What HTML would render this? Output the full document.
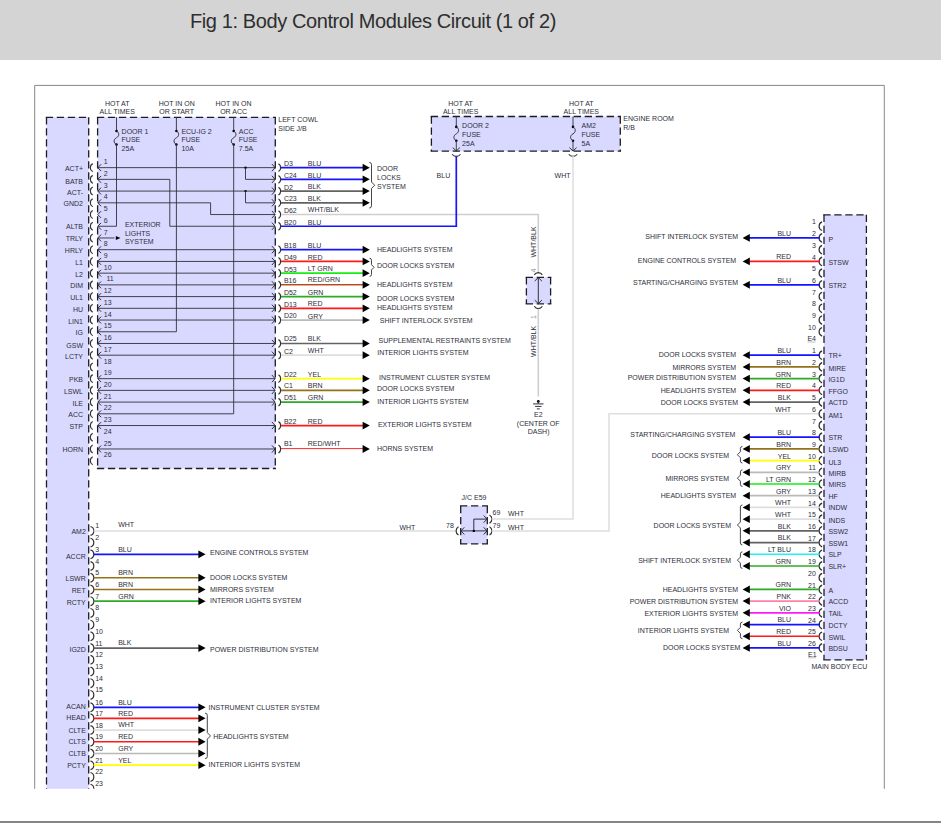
<!DOCTYPE html>
<html lang="en"><head><meta charset="utf-8"><title>Fig 1: Body Control Modules Circuit (1 of 2)</title>
<style>
html,body{margin:0;padding:0;background:#fff}
body{width:941px;height:823px;overflow:hidden;position:relative;font-family:"Liberation Sans",sans-serif}
#hdr{position:absolute;left:0;top:0;width:941px;height:60px;background:#d4d4d4}
#hdr h1{position:absolute;left:190px;top:7.5px;margin:0;font-weight:400;font-size:20px;line-height:26px;color:#2e2e2e;letter-spacing:-0.4px;white-space:nowrap}
#dia{position:absolute;left:0;top:0}
#dia text{font-family:"Liberation Sans",sans-serif;font-size:7px;fill:#2e2e3a}
#ftr{position:absolute;left:0;top:821px;width:941px;height:2px;background:#858585}
</style></head><body>
<div id="hdr"><h1>Fig 1: Body Control Modules Circuit (1 of 2)</h1></div>
<svg id="dia" width="941" height="823" viewBox="0 0 941 823">
<defs><clipPath id="cut"><rect x="0" y="0" width="941" height="788.8"/></clipPath></defs>
<polyline points="34.7,788.8 34.7,85.4 884.3,85.4 884.3,788.8" fill="none" stroke="#878787" stroke-width="1"/>
<g clip-path="url(#cut)">
<rect x="46.5" y="117.3" width="42.2" height="712.7" fill="#d9d9ff"/>
<line x1="45.8" y1="117.3" x2="89.4" y2="117.3" stroke="#1c1c26" stroke-width="1.3" stroke-dasharray="7.3 3.7" stroke-linecap="butt"/>
<line x1="46.5" y1="117.3" x2="46.5" y2="830" stroke="#1c1c26" stroke-width="1.3" stroke-dasharray="7.3 3.7" stroke-linecap="butt"/>
<line x1="88.7" y1="117.3" x2="88.7" y2="830" stroke="#1c1c26" stroke-width="1.3" stroke-dasharray="7.3 3.7" stroke-linecap="butt"/>
</g>
<rect x="97.6" y="117.3" width="177.7" height="351.2" fill="#d9d9ff"/>
<line x1="96.9" y1="117.3" x2="276" y2="117.3" stroke="#1c1c26" stroke-width="1.3" stroke-dasharray="7.3 3.7" stroke-linecap="butt"/>
<line x1="97.6" y1="117.3" x2="97.6" y2="468.5" stroke="#1c1c26" stroke-width="1.3" stroke-dasharray="7.3 3.7" stroke-linecap="butt"/>
<line x1="275.3" y1="117.3" x2="275.3" y2="468.5" stroke="#1c1c26" stroke-width="1.3" stroke-dasharray="7.3 3.7" stroke-linecap="butt"/>
<line x1="96.9" y1="468.5" x2="276" y2="468.5" stroke="#1c1c26" stroke-width="1.3" stroke-dasharray="7.3 3.7" stroke-linecap="butt"/>
<text x="117.2" y="106.21" text-anchor="middle">HOT AT</text>
<text x="117.2" y="114.01" text-anchor="middle">ALL TIMES</text>
<text x="176.7" y="106.21" text-anchor="middle">HOT IN ON</text>
<text x="176.7" y="114.01" text-anchor="middle">OR START</text>
<text x="233.6" y="106.21" text-anchor="middle">HOT IN ON</text>
<text x="233.6" y="114.01" text-anchor="middle">OR ACC</text>
<text x="278.3" y="122.11">LEFT COWL</text>
<text x="278.3" y="131.11">SIDE J/B</text>
<line x1="116.5" y1="117.3" x2="116.5" y2="131" stroke="#30303a" stroke-width="0.9"/>
<circle cx="116.5" cy="131" r="1.3" fill="#000"/>
<circle cx="116.5" cy="144.5" r="1.3" fill="#000"/>
<path d="M116.5 131 c3 1.62 3 5.13 0 6.75 c-3.2 1.62 -3.2 5.13 0 6.75" fill="none" stroke="#30303a" stroke-width="1"/>
<line x1="116.5" y1="144.5" x2="116.5" y2="226.26" stroke="#30303a" stroke-width="0.9"/>
<line x1="176.4" y1="117.3" x2="176.4" y2="131" stroke="#30303a" stroke-width="0.9"/>
<circle cx="176.4" cy="131" r="1.3" fill="#000"/>
<circle cx="176.4" cy="144.5" r="1.3" fill="#000"/>
<path d="M176.4 131 c3 1.62 3 5.13 0 6.75 c-3.2 1.62 -3.2 5.13 0 6.75" fill="none" stroke="#30303a" stroke-width="1"/>
<line x1="176.4" y1="144.5" x2="176.4" y2="331.76" stroke="#30303a" stroke-width="0.9"/>
<line x1="233.7" y1="117.3" x2="233.7" y2="131" stroke="#30303a" stroke-width="0.9"/>
<circle cx="233.7" cy="131" r="1.3" fill="#000"/>
<circle cx="233.7" cy="144.5" r="1.3" fill="#000"/>
<path d="M233.7 131 c3 1.62 3 5.13 0 6.75 c-3.2 1.62 -3.2 5.13 0 6.75" fill="none" stroke="#30303a" stroke-width="1"/>
<line x1="233.7" y1="144.5" x2="233.7" y2="413.81" stroke="#30303a" stroke-width="0.9"/>
<text x="121.6" y="134.21">DOOR 1</text>
<text x="121.6" y="142.31">FUSE</text>
<text x="121.6" y="150.91">25A</text>
<text x="181.4" y="134.21">ECU-IG 2</text>
<text x="181.4" y="142.31">FUSE</text>
<text x="181.4" y="150.91">10A</text>
<text x="238.8" y="134.21">ACC</text>
<text x="238.8" y="142.31">FUSE</text>
<text x="238.8" y="150.91">7.5A</text>
<path d="M92.7 163.65 A4.53 4.53 0 0 0 92.7 171.65" fill="none" stroke="#30303a" stroke-width="1.2"/>
<polyline points="101.1,164.25 97.8,167.65 101.1,171.05" fill="none" stroke="#30303a" stroke-width="1"/>
<text x="103.8" y="164.26">1</text>
<text x="83" y="171.16" text-anchor="end">ACT+</text>
<path d="M92.7 175.37 A4.53 4.53 0 0 0 92.7 183.37" fill="none" stroke="#30303a" stroke-width="1.2"/>
<polyline points="101.1,175.97 97.8,179.37 101.1,182.77" fill="none" stroke="#30303a" stroke-width="1"/>
<text x="103.8" y="175.98">2</text>
<text x="83" y="184.2" text-anchor="end">BATB</text>
<path d="M92.7 187.09 A4.53 4.53 0 0 0 92.7 195.09" fill="none" stroke="#30303a" stroke-width="1.2"/>
<polyline points="101.1,187.69 97.8,191.09 101.1,194.49" fill="none" stroke="#30303a" stroke-width="1"/>
<text x="103.8" y="187.7">3</text>
<text x="83" y="194.6" text-anchor="end">ACT-</text>
<path d="M92.7 198.82 A4.53 4.53 0 0 0 92.7 206.82" fill="none" stroke="#30303a" stroke-width="1.2"/>
<polyline points="101.1,199.42 97.8,202.82 101.1,206.22" fill="none" stroke="#30303a" stroke-width="1"/>
<text x="103.8" y="199.42">4</text>
<text x="83" y="206.32" text-anchor="end">GND2</text>
<path d="M92.7 210.54 A4.53 4.53 0 0 0 92.7 218.54" fill="none" stroke="#30303a" stroke-width="1.2"/>
<polyline points="101.1,211.14 97.8,214.54 101.1,217.94" fill="none" stroke="#30303a" stroke-width="1"/>
<text x="103.8" y="211.14">5</text>
<path d="M92.7 222.26 A4.53 4.53 0 0 0 92.7 230.26" fill="none" stroke="#30303a" stroke-width="1.2"/>
<polyline points="101.1,222.86 97.8,226.26 101.1,229.66" fill="none" stroke="#30303a" stroke-width="1"/>
<text x="103.8" y="222.87">6</text>
<text x="83" y="229.17" text-anchor="end">ALTB</text>
<path d="M92.7 233.98 A4.53 4.53 0 0 0 92.7 241.98" fill="none" stroke="#30303a" stroke-width="1.2"/>
<polyline points="101.1,234.58 97.8,237.98 101.1,241.38" fill="none" stroke="#30303a" stroke-width="1"/>
<text x="103.8" y="234.59">7</text>
<text x="83" y="241.25" text-anchor="end">TRLY</text>
<path d="M92.7 245.7 A4.53 4.53 0 0 0 92.7 253.7" fill="none" stroke="#30303a" stroke-width="1.2"/>
<polyline points="101.1,246.3 97.8,249.7 101.1,253.1" fill="none" stroke="#30303a" stroke-width="1"/>
<text x="103.8" y="246.31">8</text>
<text x="83" y="253.21" text-anchor="end">HRLY</text>
<path d="M92.7 257.43 A4.53 4.53 0 0 0 92.7 265.43" fill="none" stroke="#30303a" stroke-width="1.2"/>
<polyline points="101.1,258.03 97.8,261.43 101.1,264.83" fill="none" stroke="#30303a" stroke-width="1"/>
<text x="103.8" y="258.03">9</text>
<text x="83" y="264.93" text-anchor="end">L1</text>
<path d="M92.7 269.15 A4.53 4.53 0 0 0 92.7 277.15" fill="none" stroke="#30303a" stroke-width="1.2"/>
<polyline points="101.1,269.75 97.8,273.15 101.1,276.55" fill="none" stroke="#30303a" stroke-width="1"/>
<text x="103.8" y="269.75">10</text>
<text x="83" y="276.65" text-anchor="end">L2</text>
<path d="M92.7 280.87 A4.53 4.53 0 0 0 92.7 288.87" fill="none" stroke="#30303a" stroke-width="1.2"/>
<polyline points="101.1,281.47 97.8,284.87 101.1,288.27" fill="none" stroke="#30303a" stroke-width="1"/>
<text x="106.5" y="281.48">11</text>
<text x="83" y="288.38" text-anchor="end">DIM</text>
<path d="M92.7 292.59 A4.53 4.53 0 0 0 92.7 300.59" fill="none" stroke="#30303a" stroke-width="1.2"/>
<polyline points="101.1,293.19 97.8,296.59 101.1,299.99" fill="none" stroke="#30303a" stroke-width="1"/>
<text x="103.8" y="293.2">12</text>
<text x="83" y="300.1" text-anchor="end">UL1</text>
<path d="M92.7 304.31 A4.53 4.53 0 0 0 92.7 312.31" fill="none" stroke="#30303a" stroke-width="1.2"/>
<polyline points="101.1,304.91 97.8,308.31 101.1,311.71" fill="none" stroke="#30303a" stroke-width="1"/>
<text x="103.8" y="304.92">13</text>
<text x="83" y="311.82" text-anchor="end">HU</text>
<path d="M92.7 316.04 A4.53 4.53 0 0 0 92.7 324.04" fill="none" stroke="#30303a" stroke-width="1.2"/>
<polyline points="101.1,316.64 97.8,320.04 101.1,323.44" fill="none" stroke="#30303a" stroke-width="1"/>
<text x="103.8" y="316.64">14</text>
<text x="83" y="323.54" text-anchor="end">LIN1</text>
<path d="M92.7 327.76 A4.53 4.53 0 0 0 92.7 335.76" fill="none" stroke="#30303a" stroke-width="1.2"/>
<polyline points="101.1,328.36 97.8,331.76 101.1,335.16" fill="none" stroke="#30303a" stroke-width="1"/>
<text x="103.8" y="328.36">15</text>
<text x="83" y="335.26" text-anchor="end">IG</text>
<path d="M92.7 339.48 A4.53 4.53 0 0 0 92.7 347.48" fill="none" stroke="#30303a" stroke-width="1.2"/>
<polyline points="101.1,340.08 97.8,343.48 101.1,346.88" fill="none" stroke="#30303a" stroke-width="1"/>
<text x="103.8" y="340.09">16</text>
<text x="83" y="347.95" text-anchor="end">GSW</text>
<path d="M92.7 351.2 A4.53 4.53 0 0 0 92.7 359.2" fill="none" stroke="#30303a" stroke-width="1.2"/>
<polyline points="101.1,351.8 97.8,355.2 101.1,358.6" fill="none" stroke="#30303a" stroke-width="1"/>
<text x="103.8" y="351.81">17</text>
<text x="83" y="358.71" text-anchor="end">LCTY</text>
<path d="M92.7 362.92 A4.53 4.53 0 0 0 92.7 370.92" fill="none" stroke="#30303a" stroke-width="1.2"/>
<text x="103.8" y="363.53">18</text>
<path d="M92.7 374.65 A4.53 4.53 0 0 0 92.7 382.65" fill="none" stroke="#30303a" stroke-width="1.2"/>
<polyline points="101.1,375.25 97.8,378.65 101.1,382.05" fill="none" stroke="#30303a" stroke-width="1"/>
<text x="103.8" y="375.25">19</text>
<text x="83" y="382.15" text-anchor="end">PKB</text>
<path d="M92.7 386.37 A4.53 4.53 0 0 0 92.7 394.37" fill="none" stroke="#30303a" stroke-width="1.2"/>
<polyline points="101.1,386.97 97.8,390.37 101.1,393.77" fill="none" stroke="#30303a" stroke-width="1"/>
<text x="103.8" y="386.97">20</text>
<text x="83" y="393.87" text-anchor="end">LSWL</text>
<path d="M92.7 398.09 A4.53 4.53 0 0 0 92.7 406.09" fill="none" stroke="#30303a" stroke-width="1.2"/>
<polyline points="101.1,398.69 97.8,402.09 101.1,405.49" fill="none" stroke="#30303a" stroke-width="1"/>
<text x="103.8" y="398.7">21</text>
<text x="83" y="405.6" text-anchor="end">ILE</text>
<path d="M92.7 409.81 A4.53 4.53 0 0 0 92.7 417.81" fill="none" stroke="#30303a" stroke-width="1.2"/>
<polyline points="101.1,410.41 97.8,413.81 101.1,417.21" fill="none" stroke="#30303a" stroke-width="1"/>
<text x="103.8" y="410.42">22</text>
<text x="83" y="417.32" text-anchor="end">ACC</text>
<path d="M92.7 421.53 A4.53 4.53 0 0 0 92.7 429.53" fill="none" stroke="#30303a" stroke-width="1.2"/>
<polyline points="101.1,422.13 97.8,425.53 101.1,428.93" fill="none" stroke="#30303a" stroke-width="1"/>
<text x="103.8" y="422.14">23</text>
<text x="83" y="429.04" text-anchor="end">STP</text>
<path d="M92.7 433.26 A4.53 4.53 0 0 0 92.7 441.26" fill="none" stroke="#30303a" stroke-width="1.2"/>
<text x="103.8" y="433.86">24</text>
<path d="M92.7 444.98 A4.53 4.53 0 0 0 92.7 452.98" fill="none" stroke="#30303a" stroke-width="1.2"/>
<polyline points="101.1,445.58 97.8,448.98 101.1,452.38" fill="none" stroke="#30303a" stroke-width="1"/>
<text x="103.8" y="445.58">25</text>
<text x="83" y="451.64" text-anchor="end">HORN</text>
<path d="M92.7 456.7 A4.53 4.53 0 0 0 92.7 464.7" fill="none" stroke="#30303a" stroke-width="1.2"/>
<text x="103.8" y="457.31">26</text>
<line x1="97.9" y1="167.65" x2="275.1" y2="167.65" stroke="#30303a" stroke-width="0.9"/>
<line x1="97.9" y1="191.09" x2="275.1" y2="191.09" stroke="#30303a" stroke-width="0.9"/>
<line x1="97.9" y1="249.7" x2="275.1" y2="249.7" stroke="#30303a" stroke-width="0.9"/>
<line x1="97.9" y1="261.43" x2="275.1" y2="261.43" stroke="#30303a" stroke-width="0.9"/>
<line x1="97.9" y1="273.15" x2="275.1" y2="273.15" stroke="#30303a" stroke-width="0.9"/>
<line x1="97.9" y1="284.87" x2="275.1" y2="284.87" stroke="#30303a" stroke-width="0.9"/>
<line x1="97.9" y1="296.59" x2="275.1" y2="296.59" stroke="#30303a" stroke-width="0.9"/>
<line x1="97.9" y1="308.31" x2="275.1" y2="308.31" stroke="#30303a" stroke-width="0.9"/>
<line x1="97.9" y1="320.04" x2="275.1" y2="320.04" stroke="#30303a" stroke-width="0.9"/>
<line x1="97.9" y1="343.48" x2="275.1" y2="343.48" stroke="#30303a" stroke-width="0.9"/>
<line x1="97.9" y1="355.2" x2="275.1" y2="355.2" stroke="#30303a" stroke-width="0.9"/>
<line x1="97.9" y1="378.65" x2="275.1" y2="378.65" stroke="#30303a" stroke-width="0.9"/>
<line x1="97.9" y1="390.37" x2="275.1" y2="390.37" stroke="#30303a" stroke-width="0.9"/>
<line x1="97.9" y1="402.09" x2="275.1" y2="402.09" stroke="#30303a" stroke-width="0.9"/>
<line x1="97.9" y1="425.53" x2="275.1" y2="425.53" stroke="#30303a" stroke-width="0.9"/>
<line x1="97.9" y1="448.98" x2="275.1" y2="448.98" stroke="#30303a" stroke-width="0.9"/>
<circle cx="245.5" cy="167.65" r="1.2" fill="#000"/>
<polyline points="245.5,167.65 245.5,179.37 275.1,179.37" fill="none" stroke="#30303a" stroke-width="0.9"/>
<circle cx="245.5" cy="191.09" r="1.2" fill="#000"/>
<polyline points="245.5,191.09 245.5,202.82 275.1,202.82" fill="none" stroke="#30303a" stroke-width="0.9"/>
<polyline points="97.9,179.37 169.8,179.37 169.8,226.26 275.1,226.26" fill="none" stroke="#30303a" stroke-width="0.9"/>
<polyline points="97.9,202.82 210.6,202.82 210.6,214.54 275.1,214.54" fill="none" stroke="#30303a" stroke-width="0.9"/>
<line x1="97.9" y1="226.26" x2="116.5" y2="226.26" stroke="#30303a" stroke-width="0.9"/>
<line x1="97.9" y1="331.76" x2="176.4" y2="331.76" stroke="#30303a" stroke-width="0.9"/>
<line x1="97.9" y1="413.81" x2="233.7" y2="413.81" stroke="#30303a" stroke-width="0.9"/>
<line x1="97.9" y1="237.98" x2="114.5" y2="237.98" stroke="#30303a" stroke-width="0.9"/>
<polygon points="120.4,237.98 115.8,235.88 115.8,240.08" fill="#000"/>
<text x="124.9" y="227.11">EXTERIOR</text>
<text x="124.9" y="235.51">LIGHTS</text>
<text x="124.9" y="243.91">SYSTEM</text>
<polyline points="271.9,164.05 275.1,167.65 271.9,171.25" fill="none" stroke="#30303a" stroke-width="1"/>
<path d="M278.5 163.75 A4.56 4.56 0 0 1 278.5 171.55" fill="none" stroke="#30303a" stroke-width="1.2"/>
<line x1="281" y1="167.65" x2="363.8" y2="167.65" stroke="#1414ff" stroke-width="1.7"/>
<polygon points="369.8,167.65 362.6,163.75 362.6,171.55" fill="#000"/>
<text x="283.9" y="166.16">D3</text>
<text x="307.8" y="165.96">BLU</text>
<polyline points="271.9,175.77 275.1,179.37 271.9,182.97" fill="none" stroke="#30303a" stroke-width="1"/>
<path d="M278.5 175.47 A4.56 4.56 0 0 1 278.5 183.27" fill="none" stroke="#30303a" stroke-width="1.2"/>
<line x1="281" y1="179.37" x2="363.8" y2="179.37" stroke="#1414ff" stroke-width="1.7"/>
<polygon points="369.8,179.37 362.6,175.47 362.6,183.27" fill="#000"/>
<text x="283.9" y="177.88">C24</text>
<text x="307.8" y="177.68">BLU</text>
<polyline points="271.9,187.49 275.1,191.09 271.9,194.69" fill="none" stroke="#30303a" stroke-width="1"/>
<path d="M278.5 187.19 A4.56 4.56 0 0 1 278.5 194.99" fill="none" stroke="#30303a" stroke-width="1.2"/>
<line x1="281" y1="191.09" x2="363.8" y2="191.09" stroke="#626262" stroke-width="1.7"/>
<polygon points="369.8,191.09 362.6,187.19 362.6,194.99" fill="#000"/>
<text x="283.9" y="189.6">D2</text>
<text x="307.8" y="189.4">BLK</text>
<polyline points="271.9,199.22 275.1,202.82 271.9,206.42" fill="none" stroke="#30303a" stroke-width="1"/>
<path d="M278.5 198.92 A4.56 4.56 0 0 1 278.5 206.72" fill="none" stroke="#30303a" stroke-width="1.2"/>
<line x1="281" y1="202.82" x2="363.8" y2="202.82" stroke="#626262" stroke-width="1.7"/>
<polygon points="369.8,202.82 362.6,198.92 362.6,206.72" fill="#000"/>
<text x="283.9" y="201.32">C23</text>
<text x="307.8" y="201.12">BLK</text>
<polyline points="271.9,210.94 275.1,214.54 271.9,218.14" fill="none" stroke="#30303a" stroke-width="1"/>
<path d="M278.5 210.64 A4.56 4.56 0 0 1 278.5 218.44" fill="none" stroke="#30303a" stroke-width="1.2"/>
<text x="283.9" y="213.04">D62</text>
<text x="307.8" y="211.84">WHT/BLK</text>
<polyline points="271.9,222.66 275.1,226.26 271.9,229.86" fill="none" stroke="#30303a" stroke-width="1"/>
<path d="M278.5 222.36 A4.56 4.56 0 0 1 278.5 230.16" fill="none" stroke="#30303a" stroke-width="1.2"/>
<text x="283.9" y="224.77">B20</text>
<text x="307.8" y="224.57">BLU</text>
<polyline points="271.9,246.1 275.1,249.7 271.9,253.3" fill="none" stroke="#30303a" stroke-width="1"/>
<path d="M278.5 245.8 A4.56 4.56 0 0 1 278.5 253.6" fill="none" stroke="#30303a" stroke-width="1.2"/>
<line x1="281" y1="249.7" x2="363.8" y2="249.7" stroke="#1414ff" stroke-width="1.7"/>
<polygon points="369.8,249.7 362.6,245.8 362.6,253.6" fill="#000"/>
<text x="283.9" y="248.21">B18</text>
<text x="307.8" y="248.01">BLU</text>
<polyline points="271.9,257.83 275.1,261.43 271.9,265.03" fill="none" stroke="#30303a" stroke-width="1"/>
<path d="M278.5 257.53 A4.56 4.56 0 0 1 278.5 265.33" fill="none" stroke="#30303a" stroke-width="1.2"/>
<line x1="281" y1="261.43" x2="363.8" y2="261.43" stroke="#ff1a1a" stroke-width="1.7"/>
<polygon points="369.8,261.43 362.6,257.53 362.6,265.33" fill="#000"/>
<text x="283.9" y="259.93">D49</text>
<text x="307.8" y="259.73">RED</text>
<polyline points="271.9,269.55 275.1,273.15 271.9,276.75" fill="none" stroke="#30303a" stroke-width="1"/>
<path d="M278.5 269.25 A4.56 4.56 0 0 1 278.5 277.05" fill="none" stroke="#30303a" stroke-width="1.2"/>
<line x1="281" y1="273.15" x2="363.8" y2="273.15" stroke="#14ee14" stroke-width="1.7"/>
<polygon points="369.8,273.15 362.6,269.25 362.6,277.05" fill="#000"/>
<text x="283.9" y="271.65">D53</text>
<text x="307.8" y="271.45">LT GRN</text>
<polyline points="271.9,281.27 275.1,284.87 271.9,288.47" fill="none" stroke="#30303a" stroke-width="1"/>
<path d="M278.5 280.97 A4.56 4.56 0 0 1 278.5 288.77" fill="none" stroke="#30303a" stroke-width="1.2"/>
<line x1="281" y1="284.57" x2="363.8" y2="284.57" stroke="#ff2020" stroke-width="1.1"/>
<line x1="281" y1="285.42" x2="363.8" y2="285.42" stroke="#5aa030" stroke-width="0.6"/>
<polygon points="369.8,284.87 362.6,280.97 362.6,288.77" fill="#000"/>
<text x="283.9" y="283.38">B16</text>
<text x="307.8" y="282.08">RED/GRN</text>
<polyline points="271.9,292.99 275.1,296.59 271.9,300.19" fill="none" stroke="#30303a" stroke-width="1"/>
<path d="M278.5 292.69 A4.56 4.56 0 0 1 278.5 300.49" fill="none" stroke="#30303a" stroke-width="1.2"/>
<line x1="281" y1="296.59" x2="363.8" y2="296.59" stroke="#2dab24" stroke-width="1.7"/>
<polygon points="369.8,296.59 362.6,292.69 362.6,300.49" fill="#000"/>
<text x="283.9" y="295.1">D52</text>
<text x="307.8" y="294.9">GRN</text>
<polyline points="271.9,304.71 275.1,308.31 271.9,311.91" fill="none" stroke="#30303a" stroke-width="1"/>
<path d="M278.5 304.41 A4.56 4.56 0 0 1 278.5 312.21" fill="none" stroke="#30303a" stroke-width="1.2"/>
<line x1="281" y1="308.31" x2="363.8" y2="308.31" stroke="#ff1a1a" stroke-width="1.7"/>
<polygon points="369.8,308.31 362.6,304.41 362.6,312.21" fill="#000"/>
<text x="283.9" y="306.82">D13</text>
<text x="307.8" y="306.12">RED</text>
<polyline points="271.9,316.44 275.1,320.04 271.9,323.64" fill="none" stroke="#30303a" stroke-width="1"/>
<path d="M278.5 316.14 A4.56 4.56 0 0 1 278.5 323.94" fill="none" stroke="#30303a" stroke-width="1.2"/>
<line x1="281" y1="320.04" x2="363.8" y2="320.04" stroke="#b9b9b9" stroke-width="1.7"/>
<polygon points="369.8,320.04 362.6,316.14 362.6,323.94" fill="#000"/>
<text x="283.9" y="318.04">D20</text>
<text x="307.8" y="318.94">GRY</text>
<polyline points="271.9,339.88 275.1,343.48 271.9,347.08" fill="none" stroke="#30303a" stroke-width="1"/>
<path d="M278.5 339.58 A4.56 4.56 0 0 1 278.5 347.38" fill="none" stroke="#30303a" stroke-width="1.2"/>
<line x1="281" y1="343.48" x2="363.8" y2="343.48" stroke="#626262" stroke-width="1.7"/>
<polygon points="369.8,343.48 362.6,339.58 362.6,347.38" fill="#000"/>
<text x="283.9" y="340.89">D25</text>
<text x="307.8" y="340.89">BLK</text>
<polyline points="271.9,351.6 275.1,355.2 271.9,358.8" fill="none" stroke="#30303a" stroke-width="1"/>
<path d="M278.5 351.3 A4.56 4.56 0 0 1 278.5 359.1" fill="none" stroke="#30303a" stroke-width="1.2"/>
<line x1="281" y1="355.2" x2="363.8" y2="355.2" stroke="#dedede" stroke-width="1.7"/>
<polygon points="369.8,355.2 362.6,351.3 362.6,359.1" fill="#000"/>
<text x="283.9" y="354.11">C2</text>
<text x="307.8" y="353.01">WHT</text>
<polyline points="271.9,375.05 275.1,378.65 271.9,382.25" fill="none" stroke="#30303a" stroke-width="1"/>
<path d="M278.5 374.75 A4.56 4.56 0 0 1 278.5 382.55" fill="none" stroke="#30303a" stroke-width="1.2"/>
<line x1="281" y1="378.65" x2="363.8" y2="378.65" stroke="#ffff00" stroke-width="1.7"/>
<polygon points="369.8,378.65 362.6,374.75 362.6,382.55" fill="#000"/>
<text x="283.9" y="376.65">D22</text>
<text x="307.8" y="376.95">YEL</text>
<polyline points="271.9,386.77 275.1,390.37 271.9,393.97" fill="none" stroke="#30303a" stroke-width="1"/>
<path d="M278.5 386.47 A4.56 4.56 0 0 1 278.5 394.27" fill="none" stroke="#30303a" stroke-width="1.2"/>
<line x1="281" y1="390.37" x2="363.8" y2="390.37" stroke="#94721a" stroke-width="1.7"/>
<polygon points="369.8,390.37 362.6,386.47 362.6,394.27" fill="#000"/>
<text x="283.9" y="388.37">C1</text>
<text x="307.8" y="387.77">BRN</text>
<polyline points="271.9,398.49 275.1,402.09 271.9,405.69" fill="none" stroke="#30303a" stroke-width="1"/>
<path d="M278.5 398.19 A4.56 4.56 0 0 1 278.5 405.99" fill="none" stroke="#30303a" stroke-width="1.2"/>
<line x1="281" y1="402.09" x2="363.8" y2="402.09" stroke="#2dab24" stroke-width="1.7"/>
<polygon points="369.8,402.09 362.6,398.19 362.6,405.99" fill="#000"/>
<text x="283.9" y="399.8">D51</text>
<text x="307.8" y="399.5">GRN</text>
<polyline points="271.9,421.93 275.1,425.53 271.9,429.13" fill="none" stroke="#30303a" stroke-width="1"/>
<path d="M278.5 421.63 A4.56 4.56 0 0 1 278.5 429.43" fill="none" stroke="#30303a" stroke-width="1.2"/>
<line x1="281" y1="425.53" x2="363.8" y2="425.53" stroke="#ff1a1a" stroke-width="1.7"/>
<polygon points="369.8,425.53 362.6,421.63 362.6,429.43" fill="#000"/>
<text x="283.9" y="424.04">B22</text>
<text x="307.8" y="423.84">RED</text>
<polyline points="271.9,445.38 275.1,448.98 271.9,452.58" fill="none" stroke="#30303a" stroke-width="1"/>
<path d="M278.5 445.08 A4.56 4.56 0 0 1 278.5 452.88" fill="none" stroke="#30303a" stroke-width="1.2"/>
<line x1="281" y1="448.58" x2="363.8" y2="448.58" stroke="#ff2020" stroke-width="0.95"/>
<polygon points="369.8,448.98 362.6,445.08 362.6,452.88" fill="#000"/>
<text x="283.9" y="446.48">B1</text>
<text x="307.8" y="446.18">RED/WHT</text>
<polyline points="281,214.54 538.3,214.54 538.3,273.4" fill="none" stroke="#cfcfcf" stroke-width="1.6"/>
<polyline points="281,226.26 456.3,226.26 456.3,156" fill="none" stroke="#1414ff" stroke-width="1.7"/>
<path d="M369.3 162.45 q2.2 0 2.2 2.2 L371.5 182.03 l3.2 3.2 l-3.2 3.2 L371.5 205.82 q0 2.2 -2.2 2.2" fill="none" stroke="#30303a" stroke-width="0.9"/>
<text x="377" y="170.91">DOOR</text>
<text x="377" y="179.91">LOCKS</text>
<text x="377" y="189.11">SYSTEM</text>
<text x="377" y="251.81">HEADLIGHTS SYSTEM</text>
<path d="M369.5 258.23 q2 0 2 2 L371.5 264.69 l2.6 2.6 l-2.6 2.6 L371.5 274.35 q0 2 -2 2" fill="none" stroke="#30303a" stroke-width="0.9"/>
<text x="377" y="268.11">DOOR LOCKS SYSTEM</text>
<text x="377" y="286.98">HEADLIGHTS SYSTEM</text>
<text x="377" y="301.11">DOOR LOCKS SYSTEM</text>
<text x="377" y="310.21">HEADLIGHTS SYSTEM</text>
<text x="379.8" y="322.94">SHIFT INTERLOCK SYSTEM</text>
<text x="378.6" y="342.79">SUPPLEMENTAL RESTRAINTS SYSTEM</text>
<text x="377.2" y="354.91">INTERIOR LIGHTS SYSTEM</text>
<text x="379" y="379.75">INSTRUMENT CLUSTER SYSTEM</text>
<text x="377" y="391.47">DOOR LOCKS SYSTEM</text>
<text x="377.2" y="403.6">INTERIOR LIGHTS SYSTEM</text>
<text x="377.9" y="426.64">EXTERIOR LIGHTS SYSTEM</text>
<text x="377" y="450.68">HORNS SYSTEM</text>
<rect x="431.4" y="116.5" width="188.9" height="34.7" fill="#d9d9ff"/>
<line x1="430.7" y1="116.5" x2="621" y2="116.5" stroke="#1c1c26" stroke-width="1.3" stroke-dasharray="7.3 3.7" stroke-linecap="butt"/>
<line x1="431.4" y1="116.5" x2="431.4" y2="151.2" stroke="#1c1c26" stroke-width="1.3" stroke-dasharray="7.3 3.7" stroke-linecap="butt"/>
<line x1="620.3" y1="116.5" x2="620.3" y2="151.2" stroke="#1c1c26" stroke-width="1.3" stroke-dasharray="7.3 3.7" stroke-linecap="butt"/>
<line x1="430.7" y1="151.2" x2="621" y2="151.2" stroke="#1c1c26" stroke-width="1.3" stroke-dasharray="7.3 3.7" stroke-linecap="butt"/>
<text x="460.6" y="106.21" text-anchor="middle">HOT AT</text>
<text x="460.6" y="114.01" text-anchor="middle">ALL TIMES</text>
<text x="581.3" y="106.21" text-anchor="middle">HOT AT</text>
<text x="581.3" y="114.01" text-anchor="middle">ALL TIMES</text>
<text x="623.3" y="121.31">ENGINE ROOM</text>
<text x="623.3" y="129.71">R/B</text>
<line x1="456.3" y1="116.5" x2="456.3" y2="126.9" stroke="#30303a" stroke-width="0.9"/>
<circle cx="456.3" cy="126.9" r="1.3" fill="#000"/>
<circle cx="456.3" cy="140.8" r="1.3" fill="#000"/>
<path d="M456.3 126.9 c3 1.67 3 5.28 0 6.95 c-3.2 1.67 -3.2 5.28 0 6.95" fill="none" stroke="#30303a" stroke-width="1"/>
<line x1="456.3" y1="140.8" x2="456.3" y2="151.2" stroke="#30303a" stroke-width="0.9"/>
<polyline points="452.7,147.6 456.3,151 459.9,147.6" fill="none" stroke="#30303a" stroke-width="1"/>
<path d="M452.1 154.2 A5.11 5.11 0 0 0 460.5 154.2" fill="none" stroke="#30303a" stroke-width="1.1"/>
<text x="462.1" y="127.91">DOOR 2</text>
<text x="462.1" y="136.81">FUSE</text>
<text x="462.1" y="146.21">25A</text>
<line x1="573" y1="116.5" x2="573" y2="126.9" stroke="#30303a" stroke-width="0.9"/>
<circle cx="573" cy="126.9" r="1.3" fill="#000"/>
<circle cx="573" cy="140.8" r="1.3" fill="#000"/>
<path d="M573 126.9 c3 1.67 3 5.28 0 6.95 c-3.2 1.67 -3.2 5.28 0 6.95" fill="none" stroke="#30303a" stroke-width="1"/>
<line x1="573" y1="140.8" x2="573" y2="151.2" stroke="#30303a" stroke-width="0.9"/>
<polyline points="569.4,147.6 573,151 576.6,147.6" fill="none" stroke="#30303a" stroke-width="1"/>
<path d="M568.8 154.2 A5.11 5.11 0 0 0 577.2 154.2" fill="none" stroke="#30303a" stroke-width="1.1"/>
<text x="581.5" y="127.91">AM2</text>
<text x="581.5" y="136.81">FUSE</text>
<text x="581.5" y="146.21">5A</text>
<text x="436.6" y="178.11">BLU</text>
<text x="554.6" y="178.11">WHT</text>
<rect x="526.4" y="277.3" width="24.2" height="26.6" fill="#d9d9ff"/>
<line x1="525.7" y1="277.3" x2="551.3" y2="277.3" stroke="#1c1c26" stroke-width="1.3" stroke-dasharray="7.3 3.7" stroke-linecap="butt"/>
<line x1="526.4" y1="277.3" x2="526.4" y2="303.9" stroke="#1c1c26" stroke-width="1.3" stroke-dasharray="7.3 3.7" stroke-linecap="butt"/>
<line x1="550.6" y1="277.3" x2="550.6" y2="303.9" stroke="#1c1c26" stroke-width="1.3" stroke-dasharray="7.3 3.7" stroke-linecap="butt"/>
<line x1="525.7" y1="303.9" x2="551.3" y2="303.9" stroke="#1c1c26" stroke-width="1.3" stroke-dasharray="7.3 3.7" stroke-linecap="butt"/>
<line x1="538.3" y1="277.6" x2="538.3" y2="303.6" stroke="#30303a" stroke-width="1"/>
<polyline points="534.7,281.1 538.3,277.6 541.9,281.1" fill="none" stroke="#30303a" stroke-width="1"/>
<polyline points="534.7,300.1 538.3,303.6 541.9,300.1" fill="none" stroke="#30303a" stroke-width="1"/>
<path d="M534.3 274.9 A4.63 4.63 0 0 1 542.3 274.9" fill="none" stroke="#30303a" stroke-width="1.1"/>
<path d="M534.3 306.3 A4.63 4.63 0 0 0 542.3 306.3" fill="none" stroke="#30303a" stroke-width="1.1"/>
<line x1="538.3" y1="308.9" x2="538.3" y2="396.5" stroke="#cfcfcf" stroke-width="1.6"/>
<text transform="translate(533.4 242) rotate(-90)" text-anchor="middle" y="2.51">WHT/BLK</text>
<text transform="translate(533.6 270.6) rotate(-90)" text-anchor="middle" y="2.51" style="fill:#8a8a96">4</text>
<text transform="translate(533.4 317) rotate(-90)" text-anchor="middle" y="2.51" style="fill:#8a8a96">1</text>
<text transform="translate(533.4 341.4) rotate(-90)" text-anchor="middle" y="2.51">WHT/BLK</text>
<circle cx="538.3" cy="401.4" r="1.4" fill="#000"/>
<line x1="538.3" y1="401.4" x2="538.3" y2="403.6" stroke="#30303a" stroke-width="1"/>
<line x1="533.1" y1="403.9" x2="543.5" y2="403.9" stroke="#30303a" stroke-width="1"/>
<line x1="535.1" y1="406.4" x2="541.5" y2="406.4" stroke="#30303a" stroke-width="1"/>
<line x1="536.9" y1="408.9" x2="539.7" y2="408.9" stroke="#30303a" stroke-width="1"/>
<text x="538.4" y="417.11" text-anchor="middle">E2</text>
<text x="538.2" y="425.91" text-anchor="middle">(CENTER OF</text>
<text x="538.6" y="434.11" text-anchor="middle">DASH)</text>
<g clip-path="url(#cut)">
<path d="M90.5 526.5 A4.58 4.58 0 0 1 90.5 535.3" fill="none" stroke="#30303a" stroke-width="1.2"/>
<text x="95.2" y="528.41">1</text>
<text x="85.8" y="534.31" text-anchor="end">AM2</text>
<path d="M90.5 538.22 A4.58 4.58 0 0 1 90.5 547.01" fill="none" stroke="#30303a" stroke-width="1.2"/>
<text x="95.2" y="540.12">2</text>
<path d="M90.5 549.93 A4.58 4.58 0 0 1 90.5 558.73" fill="none" stroke="#30303a" stroke-width="1.2"/>
<text x="95.2" y="551.84">3</text>
<text x="85.8" y="559.34" text-anchor="end">ACCR</text>
<line x1="93.6" y1="554.33" x2="199.6" y2="554.33" stroke="#1414ff" stroke-width="1.7"/>
<polygon points="205.6,554.33 198.4,550.43 198.4,558.23" fill="#000"/>
<text x="118.2" y="551.64">BLU</text>
<text x="210" y="555.44">ENGINE CONTROLS SYSTEM</text>
<path d="M90.5 561.64 A4.58 4.58 0 0 1 90.5 570.44" fill="none" stroke="#30303a" stroke-width="1.2"/>
<text x="95.2" y="563.55">4</text>
<path d="M90.5 573.36 A4.58 4.58 0 0 1 90.5 582.16" fill="none" stroke="#30303a" stroke-width="1.2"/>
<text x="95.2" y="575.27">5</text>
<text x="85.8" y="581.17" text-anchor="end">LSWR</text>
<line x1="93.6" y1="577.76" x2="199.6" y2="577.76" stroke="#94721a" stroke-width="1.7"/>
<polygon points="205.6,577.76 198.4,573.86 198.4,581.66" fill="#000"/>
<text x="118.2" y="575.07">BRN</text>
<text x="210" y="580.07">DOOR LOCKS SYSTEM</text>
<path d="M90.5 585.08 A4.58 4.58 0 0 1 90.5 593.88" fill="none" stroke="#30303a" stroke-width="1.2"/>
<text x="95.2" y="586.98">6</text>
<text x="85.8" y="592.88" text-anchor="end">RET</text>
<line x1="93.6" y1="589.48" x2="199.6" y2="589.48" stroke="#94721a" stroke-width="1.7"/>
<polygon points="205.6,589.48 198.4,585.58 198.4,593.38" fill="#000"/>
<text x="118.2" y="586.78">BRN</text>
<text x="210" y="591.78">MIRRORS SYSTEM</text>
<path d="M90.5 596.79 A4.58 4.58 0 0 1 90.5 605.59" fill="none" stroke="#30303a" stroke-width="1.2"/>
<text x="95.2" y="598.7">7</text>
<text x="85.8" y="604.6" text-anchor="end">RCTY</text>
<line x1="93.6" y1="601.19" x2="199.6" y2="601.19" stroke="#2dab24" stroke-width="1.7"/>
<polygon points="205.6,601.19 198.4,597.29 198.4,605.09" fill="#000"/>
<text x="118.2" y="598.5">GRN</text>
<text x="210" y="602.5">INTERIOR LIGHTS SYSTEM</text>
<path d="M90.5 608.5 A4.58 4.58 0 0 1 90.5 617.3" fill="none" stroke="#30303a" stroke-width="1.2"/>
<text x="95.2" y="610.41">8</text>
<path d="M90.5 620.22 A4.58 4.58 0 0 1 90.5 629.02" fill="none" stroke="#30303a" stroke-width="1.2"/>
<text x="95.2" y="622.13">9</text>
<path d="M90.5 631.94 A4.58 4.58 0 0 1 90.5 640.74" fill="none" stroke="#30303a" stroke-width="1.2"/>
<text x="95.2" y="633.84">10</text>
<path d="M90.5 643.65 A4.58 4.58 0 0 1 90.5 652.45" fill="none" stroke="#30303a" stroke-width="1.2"/>
<text x="95.2" y="645.56">11</text>
<text x="85.8" y="652.36" text-anchor="end">IG2D</text>
<line x1="93.6" y1="648.05" x2="199.6" y2="648.05" stroke="#626262" stroke-width="1.7"/>
<polygon points="205.6,648.05 198.4,644.15 198.4,651.95" fill="#000"/>
<text x="118.2" y="645.36">BLK</text>
<text x="210" y="651.56">POWER DISTRIBUTION SYSTEM</text>
<path d="M90.5 655.37 A4.58 4.58 0 0 1 90.5 664.16" fill="none" stroke="#30303a" stroke-width="1.2"/>
<text x="95.2" y="657.27">12</text>
<path d="M90.5 667.08 A4.58 4.58 0 0 1 90.5 675.88" fill="none" stroke="#30303a" stroke-width="1.2"/>
<text x="95.2" y="668.99">13</text>
<path d="M90.5 678.79 A4.58 4.58 0 0 1 90.5 687.59" fill="none" stroke="#30303a" stroke-width="1.2"/>
<text x="95.2" y="680.7">14</text>
<path d="M90.5 690.51 A4.58 4.58 0 0 1 90.5 699.31" fill="none" stroke="#30303a" stroke-width="1.2"/>
<text x="95.2" y="692.42">15</text>
<path d="M90.5 702.93 A4.58 4.58 0 0 1 90.5 711.73" fill="none" stroke="#30303a" stroke-width="1.2"/>
<text x="95.2" y="704.83">16</text>
<text x="85.8" y="708.93" text-anchor="end">ACAN</text>
<line x1="93.6" y1="707.33" x2="199.6" y2="707.33" stroke="#1414ff" stroke-width="1.7"/>
<polygon points="205.6,707.33 198.4,703.43 198.4,711.23" fill="#000"/>
<text x="118.2" y="704.63">BLU</text>
<text x="208.6" y="710.23">INSTRUMENT CLUSTER SYSTEM</text>
<path d="M90.5 713.94 A4.58 4.58 0 0 1 90.5 722.74" fill="none" stroke="#30303a" stroke-width="1.2"/>
<text x="95.2" y="715.85">17</text>
<text x="85.8" y="719.95" text-anchor="end">HEAD</text>
<line x1="93.6" y1="718.34" x2="199.6" y2="718.34" stroke="#ff1a1a" stroke-width="1.7"/>
<polygon points="205.6,718.34 198.4,714.44 198.4,722.24" fill="#000"/>
<text x="118.2" y="715.65">RED</text>
<path d="M90.5 725.65 A4.58 4.58 0 0 1 90.5 734.45" fill="none" stroke="#30303a" stroke-width="1.2"/>
<text x="95.2" y="727.56">18</text>
<text x="85.8" y="732.76" text-anchor="end">CLTE</text>
<line x1="93.6" y1="730.05" x2="199.6" y2="730.05" stroke="#dedede" stroke-width="1.7"/>
<polygon points="205.6,730.05 198.4,726.15 198.4,733.95" fill="#000"/>
<text x="118.2" y="727.36">WHT</text>
<path d="M90.5 737.37 A4.58 4.58 0 0 1 90.5 746.17" fill="none" stroke="#30303a" stroke-width="1.2"/>
<text x="95.2" y="739.28">19</text>
<text x="85.8" y="744.08" text-anchor="end">CLTS</text>
<line x1="93.6" y1="741.77" x2="199.6" y2="741.77" stroke="#ff1a1a" stroke-width="1.7"/>
<polygon points="205.6,741.77 198.4,737.87 198.4,745.67" fill="#000"/>
<text x="118.2" y="739.08">RED</text>
<path d="M90.5 749.09 A4.58 4.58 0 0 1 90.5 757.88" fill="none" stroke="#30303a" stroke-width="1.2"/>
<text x="95.2" y="750.99">20</text>
<text x="85.8" y="756.39" text-anchor="end">CLTB</text>
<line x1="93.6" y1="753.49" x2="199.6" y2="753.49" stroke="#b9b9b9" stroke-width="1.7"/>
<polygon points="205.6,753.49 198.4,749.59 198.4,757.38" fill="#000"/>
<text x="118.2" y="750.79">GRY</text>
<path d="M90.5 760.8 A4.58 4.58 0 0 1 90.5 769.6" fill="none" stroke="#30303a" stroke-width="1.2"/>
<text x="95.2" y="762.71">21</text>
<text x="85.8" y="767.71" text-anchor="end">PCTY</text>
<line x1="93.6" y1="765.2" x2="199.6" y2="765.2" stroke="#ffff00" stroke-width="1.7"/>
<polygon points="205.6,765.2 198.4,761.3 198.4,769.1" fill="#000"/>
<text x="118.2" y="762.51">YEL</text>
<text x="208.6" y="766.71">INTERIOR LIGHTS SYSTEM</text>
<path d="M90.5 772.51 A4.58 4.58 0 0 1 90.5 781.31" fill="none" stroke="#30303a" stroke-width="1.2"/>
<text x="95.2" y="774.42">22</text>
<path d="M90.5 784.23 A4.58 4.58 0 0 1 90.5 793.03" fill="none" stroke="#30303a" stroke-width="1.2"/>
<text x="95.2" y="786.14">23</text>
</g>
<path d="M205.1 713.14 q2.2 0 2.2 2.2 L207.3 732.71 l3.2 3.2 l-3.2 3.2 L207.3 756.49 q0 2.2 -2.2 2.2" fill="none" stroke="#30303a" stroke-width="0.9"/>
<text x="213.2" y="739.11">HEADLIGHTS SYSTEM</text>
<line x1="93.6" y1="530.9" x2="456.4" y2="530.9" stroke="#dedede" stroke-width="1.5"/>
<text x="118.2" y="527.21">WHT</text>
<text x="399.4" y="529.71">WHT</text>
<rect x="460.7" y="505.9" width="26.6" height="38" fill="#d9d9ff"/>
<line x1="460" y1="505.9" x2="488" y2="505.9" stroke="#1c1c26" stroke-width="1.3" stroke-dasharray="7.3 3.7" stroke-linecap="butt"/>
<line x1="460.7" y1="505.9" x2="460.7" y2="543.9" stroke="#1c1c26" stroke-width="1.3" stroke-dasharray="7.3 3.7" stroke-linecap="butt"/>
<line x1="487.3" y1="505.9" x2="487.3" y2="543.9" stroke="#1c1c26" stroke-width="1.3" stroke-dasharray="7.3 3.7" stroke-linecap="butt"/>
<line x1="460" y1="543.9" x2="488" y2="543.9" stroke="#1c1c26" stroke-width="1.3" stroke-dasharray="7.3 3.7" stroke-linecap="butt"/>
<text x="461.6" y="500.31">J/C E59</text>
<line x1="461" y1="530.9" x2="487" y2="530.9" stroke="#30303a" stroke-width="1"/>
<polyline points="473.8,530.9 473.8,519.1 487,519.1" fill="none" stroke="#30303a" stroke-width="1"/>
<circle cx="473.8" cy="530.9" r="1.2" fill="#000"/>
<polyline points="464.3,527.3 461,530.9 464.3,534.5" fill="none" stroke="#30303a" stroke-width="1"/>
<polyline points="483.7,515.5 487,519.1 483.7,522.7" fill="none" stroke="#30303a" stroke-width="1"/>
<path d="M489.5 515 A4.7 4.7 0 0 1 489.5 523.2" fill="none" stroke="#30303a" stroke-width="1.2"/>
<polyline points="483.7,527.3 487,530.9 483.7,534.5" fill="none" stroke="#30303a" stroke-width="1"/>
<path d="M489.5 526.8 A4.7 4.7 0 0 1 489.5 535" fill="none" stroke="#30303a" stroke-width="1.2"/>
<path d="M458.5 526.8 A4.7 4.7 0 0 0 458.5 535" fill="none" stroke="#30303a" stroke-width="1.2"/>
<text x="446" y="528.11">78</text>
<text x="492.5" y="515.11">69</text>
<text x="508" y="516.31">WHT</text>
<text x="492.5" y="528.11">79</text>
<text x="508" y="529.71">WHT</text>
<polyline points="573,156 573,519.1 491.6,519.1" fill="none" stroke="#dedede" stroke-width="1.5"/>
<polyline points="491.6,530.9 609,530.9 609,413.75 819.6,413.75" fill="none" stroke="#dedede" stroke-width="1.5"/>
<rect x="824" y="214.8" width="42.4" height="445" fill="#d9d9ff"/>
<line x1="823.3" y1="214.8" x2="867.1" y2="214.8" stroke="#1c1c26" stroke-width="1.3" stroke-dasharray="7.3 3.7" stroke-linecap="butt"/>
<line x1="824" y1="214.8" x2="824" y2="659.8" stroke="#1c1c26" stroke-width="1.3" stroke-dasharray="7.3 3.7" stroke-linecap="butt"/>
<line x1="866.4" y1="214.8" x2="866.4" y2="659.8" stroke="#1c1c26" stroke-width="1.3" stroke-dasharray="7.3 3.7" stroke-linecap="butt"/>
<line x1="823.3" y1="659.8" x2="867.1" y2="659.8" stroke="#1c1c26" stroke-width="1.3" stroke-dasharray="7.3 3.7" stroke-linecap="butt"/>
<text x="811.4" y="668.71">MAIN BODY ECU</text>
<path d="M822.1 221.9 A4.58 4.58 0 0 0 822.1 230.5" fill="none" stroke="#30303a" stroke-width="1.2"/>
<text x="815.9" y="224.31" text-anchor="end">1</text>
<path d="M822.1 233.63 A4.58 4.58 0 0 0 822.1 242.23" fill="none" stroke="#30303a" stroke-width="1.2"/>
<text x="815.9" y="236.04" text-anchor="end">2</text>
<line x1="748.6" y1="237.93" x2="819.8" y2="237.93" stroke="#1414ff" stroke-width="1.7"/>
<polygon points="742.6,237.93 749.8,234.03 749.8,241.83" fill="#000"/>
<text x="791" y="235.84" text-anchor="end">BLU</text>
<text x="738.2" y="239.21" text-anchor="end">SHIFT INTERLOCK SYSTEM</text>
<text x="828.4" y="241.94">P</text>
<path d="M822.1 245.36 A4.58 4.58 0 0 0 822.1 253.96" fill="none" stroke="#30303a" stroke-width="1.2"/>
<text x="815.9" y="247.77" text-anchor="end">3</text>
<path d="M822.1 257.09 A4.58 4.58 0 0 0 822.1 265.69" fill="none" stroke="#30303a" stroke-width="1.2"/>
<text x="815.9" y="259.5" text-anchor="end">4</text>
<line x1="748.6" y1="261.39" x2="819.8" y2="261.39" stroke="#ff1a1a" stroke-width="1.7"/>
<polygon points="742.6,261.39 749.8,257.49 749.8,265.29" fill="#000"/>
<text x="791" y="259.3" text-anchor="end">RED</text>
<text x="736.2" y="263.31" text-anchor="end">ENGINE CONTROLS SYSTEM</text>
<text x="828.4" y="264.7">STSW</text>
<path d="M822.1 268.82 A4.58 4.58 0 0 0 822.1 277.42" fill="none" stroke="#30303a" stroke-width="1.2"/>
<text x="815.9" y="271.23" text-anchor="end">5</text>
<path d="M822.1 280.55 A4.58 4.58 0 0 0 822.1 289.15" fill="none" stroke="#30303a" stroke-width="1.2"/>
<text x="815.9" y="282.96" text-anchor="end">6</text>
<line x1="748.6" y1="284.85" x2="819.8" y2="284.85" stroke="#1414ff" stroke-width="1.7"/>
<polygon points="742.6,284.85 749.8,280.95 749.8,288.75" fill="#000"/>
<text x="791" y="282.76" text-anchor="end">BLU</text>
<text x="738.2" y="285.31" text-anchor="end">STARTING/CHARGING SYSTEM</text>
<text x="828.4" y="287.76">STR2</text>
<path d="M822.1 292.28 A4.58 4.58 0 0 0 822.1 300.88" fill="none" stroke="#30303a" stroke-width="1.2"/>
<text x="815.9" y="294.69" text-anchor="end">7</text>
<path d="M822.1 304.01 A4.58 4.58 0 0 0 822.1 312.61" fill="none" stroke="#30303a" stroke-width="1.2"/>
<text x="815.9" y="306.42" text-anchor="end">8</text>
<path d="M822.1 315.74 A4.58 4.58 0 0 0 822.1 324.34" fill="none" stroke="#30303a" stroke-width="1.2"/>
<text x="815.9" y="318.15" text-anchor="end">9</text>
<path d="M822.1 327.47 A4.58 4.58 0 0 0 822.1 336.07" fill="none" stroke="#30303a" stroke-width="1.2"/>
<text x="815.9" y="329.88" text-anchor="end">10</text>
<text x="807.4" y="341.11">E4</text>
<line x1="807.4" y1="342" x2="815.6" y2="342" stroke="#999" stroke-width="0.6"/>
<path d="M822.1 350.9 A4.58 4.58 0 0 0 822.1 359.5" fill="none" stroke="#30303a" stroke-width="1.2"/>
<text x="815.9" y="353.31" text-anchor="end">1</text>
<line x1="748.6" y1="355.2" x2="819.8" y2="355.2" stroke="#1414ff" stroke-width="1.7"/>
<polygon points="742.6,355.2 749.8,351.3 749.8,359.1" fill="#000"/>
<text x="791" y="353.11" text-anchor="end">BLU</text>
<text x="736.2" y="357.11" text-anchor="end">DOOR LOCKS SYSTEM</text>
<text x="828.4" y="358.21">TR+</text>
<path d="M822.1 362.61 A4.58 4.58 0 0 0 822.1 371.21" fill="none" stroke="#30303a" stroke-width="1.2"/>
<text x="815.9" y="365.02" text-anchor="end">2</text>
<line x1="748.6" y1="366.91" x2="819.8" y2="366.91" stroke="#94721a" stroke-width="1.7"/>
<polygon points="742.6,366.91 749.8,363.01 749.8,370.81" fill="#000"/>
<text x="791" y="364.82" text-anchor="end">BRN</text>
<text x="736.2" y="370.11" text-anchor="end">MIRRORS SYSTEM</text>
<text x="828.4" y="371.02">MIRE</text>
<path d="M822.1 374.32 A4.58 4.58 0 0 0 822.1 382.92" fill="none" stroke="#30303a" stroke-width="1.2"/>
<text x="815.9" y="376.73" text-anchor="end">3</text>
<line x1="748.6" y1="378.62" x2="819.8" y2="378.62" stroke="#2dab24" stroke-width="1.7"/>
<polygon points="742.6,378.62 749.8,374.72 749.8,382.52" fill="#000"/>
<text x="791" y="376.53" text-anchor="end">GRN</text>
<text x="736.2" y="380.41" text-anchor="end">POWER DISTRIBUTION SYSTEM</text>
<text x="828.4" y="381.83">IG1D</text>
<path d="M822.1 386.03 A4.58 4.58 0 0 0 822.1 394.63" fill="none" stroke="#30303a" stroke-width="1.2"/>
<text x="815.9" y="388.44" text-anchor="end">4</text>
<line x1="748.6" y1="390.33" x2="819.8" y2="390.33" stroke="#ff1a1a" stroke-width="1.7"/>
<polygon points="742.6,390.33 749.8,386.43 749.8,394.23" fill="#000"/>
<text x="791" y="388.24" text-anchor="end">RED</text>
<text x="736.2" y="393.11" text-anchor="end">HEADLIGHTS SYSTEM</text>
<text x="828.4" y="393.54">FFGO</text>
<path d="M822.1 397.74 A4.58 4.58 0 0 0 822.1 406.34" fill="none" stroke="#30303a" stroke-width="1.2"/>
<text x="815.9" y="400.15" text-anchor="end">5</text>
<line x1="748.6" y1="402.04" x2="819.8" y2="402.04" stroke="#626262" stroke-width="1.7"/>
<polygon points="742.6,402.04 749.8,398.14 749.8,405.94" fill="#000"/>
<text x="791" y="399.95" text-anchor="end">BLK</text>
<text x="738.2" y="405.01" text-anchor="end">DOOR LOCKS SYSTEM</text>
<text x="828.4" y="405.25">ACTD</text>
<path d="M822.1 409.45 A4.58 4.58 0 0 0 822.1 418.05" fill="none" stroke="#30303a" stroke-width="1.2"/>
<text x="815.9" y="411.86" text-anchor="end">6</text>
<text x="791" y="411.66" text-anchor="end">WHT</text>
<text x="828.4" y="417.86">AM1</text>
<path d="M822.1 421.16 A4.58 4.58 0 0 0 822.1 429.76" fill="none" stroke="#30303a" stroke-width="1.2"/>
<text x="815.9" y="423.57" text-anchor="end">7</text>
<path d="M822.1 432.87 A4.58 4.58 0 0 0 822.1 441.47" fill="none" stroke="#30303a" stroke-width="1.2"/>
<text x="815.9" y="435.28" text-anchor="end">8</text>
<line x1="748.6" y1="437.17" x2="819.8" y2="437.17" stroke="#1414ff" stroke-width="1.7"/>
<polygon points="742.6,437.17 749.8,433.27 749.8,441.07" fill="#000"/>
<text x="791" y="435.08" text-anchor="end">BLU</text>
<text x="735.4" y="437.11" text-anchor="end">STARTING/CHARGING SYSTEM</text>
<text x="828.4" y="440.38">STR</text>
<path d="M822.1 444.58 A4.58 4.58 0 0 0 822.1 453.18" fill="none" stroke="#30303a" stroke-width="1.2"/>
<text x="815.9" y="446.99" text-anchor="end">9</text>
<line x1="748.6" y1="448.88" x2="819.8" y2="448.88" stroke="#94721a" stroke-width="1.7"/>
<polygon points="742.6,448.88 749.8,444.98 749.8,452.78" fill="#000"/>
<text x="791" y="446.79" text-anchor="end">BRN</text>
<text x="828.4" y="452.09">LSWD</text>
<path d="M822.1 456.29 A4.58 4.58 0 0 0 822.1 464.89" fill="none" stroke="#30303a" stroke-width="1.2"/>
<text x="815.9" y="458.7" text-anchor="end">10</text>
<line x1="748.6" y1="460.59" x2="819.8" y2="460.59" stroke="#ffff00" stroke-width="1.7"/>
<polygon points="742.6,460.59 749.8,456.69 749.8,464.49" fill="#000"/>
<text x="791" y="458.5" text-anchor="end">YEL</text>
<text x="828.4" y="464.7">UL3</text>
<path d="M822.1 468 A4.58 4.58 0 0 0 822.1 476.6" fill="none" stroke="#30303a" stroke-width="1.2"/>
<text x="815.9" y="470.41" text-anchor="end">11</text>
<line x1="748.6" y1="472.3" x2="819.8" y2="472.3" stroke="#b9b9b9" stroke-width="1.7"/>
<polygon points="742.6,472.3 749.8,468.4 749.8,476.2" fill="#000"/>
<text x="791" y="470.21" text-anchor="end">GRY</text>
<text x="828.4" y="475.81">MIRB</text>
<path d="M822.1 479.71 A4.58 4.58 0 0 0 822.1 488.31" fill="none" stroke="#30303a" stroke-width="1.2"/>
<text x="815.9" y="482.12" text-anchor="end">12</text>
<line x1="748.6" y1="484.01" x2="819.8" y2="484.01" stroke="#14ee14" stroke-width="1.7"/>
<polygon points="742.6,484.01 749.8,480.11 749.8,487.91" fill="#000"/>
<text x="791" y="481.92" text-anchor="end">LT GRN</text>
<text x="828.4" y="487.22">MIRS</text>
<path d="M822.1 491.42 A4.58 4.58 0 0 0 822.1 500.02" fill="none" stroke="#30303a" stroke-width="1.2"/>
<text x="815.9" y="493.83" text-anchor="end">13</text>
<line x1="748.6" y1="495.72" x2="819.8" y2="495.72" stroke="#b9b9b9" stroke-width="1.7"/>
<polygon points="742.6,495.72 749.8,491.82 749.8,499.62" fill="#000"/>
<text x="791" y="493.63" text-anchor="end">GRY</text>
<text x="736.2" y="498.01" text-anchor="end">HEADLIGHTS SYSTEM</text>
<text x="828.4" y="498.93">HF</text>
<path d="M822.1 503.13 A4.58 4.58 0 0 0 822.1 511.73" fill="none" stroke="#30303a" stroke-width="1.2"/>
<text x="815.9" y="505.54" text-anchor="end">14</text>
<line x1="748.6" y1="507.43" x2="819.8" y2="507.43" stroke="#dedede" stroke-width="1.7"/>
<polygon points="742.6,507.43 749.8,503.53 749.8,511.33" fill="#000"/>
<text x="791" y="505.34" text-anchor="end">WHT</text>
<text x="828.4" y="510.34">INDW</text>
<path d="M822.1 514.84 A4.58 4.58 0 0 0 822.1 523.44" fill="none" stroke="#30303a" stroke-width="1.2"/>
<text x="815.9" y="517.25" text-anchor="end">15</text>
<line x1="748.6" y1="519.14" x2="819.8" y2="519.14" stroke="#dedede" stroke-width="1.7"/>
<polygon points="742.6,519.14 749.8,515.24 749.8,523.04" fill="#000"/>
<text x="791" y="517.05" text-anchor="end">WHT</text>
<text x="828.4" y="523.25">INDS</text>
<path d="M822.1 526.55 A4.58 4.58 0 0 0 822.1 535.15" fill="none" stroke="#30303a" stroke-width="1.2"/>
<text x="815.9" y="528.96" text-anchor="end">16</text>
<line x1="748.6" y1="530.85" x2="819.8" y2="530.85" stroke="#626262" stroke-width="1.7"/>
<polygon points="742.6,530.85 749.8,526.95 749.8,534.75" fill="#000"/>
<text x="791" y="528.76" text-anchor="end">BLK</text>
<text x="828.4" y="534.06">SSW2</text>
<path d="M822.1 538.26 A4.58 4.58 0 0 0 822.1 546.86" fill="none" stroke="#30303a" stroke-width="1.2"/>
<text x="815.9" y="540.67" text-anchor="end">17</text>
<line x1="748.6" y1="542.56" x2="819.8" y2="542.56" stroke="#626262" stroke-width="1.7"/>
<polygon points="742.6,542.56 749.8,538.66 749.8,546.46" fill="#000"/>
<text x="791" y="540.47" text-anchor="end">BLK</text>
<text x="828.4" y="545.77">SSW1</text>
<path d="M822.1 549.97 A4.58 4.58 0 0 0 822.1 558.57" fill="none" stroke="#30303a" stroke-width="1.2"/>
<text x="815.9" y="552.38" text-anchor="end">18</text>
<line x1="748.6" y1="554.27" x2="819.8" y2="554.27" stroke="#19f5f5" stroke-width="1.7"/>
<polygon points="742.6,554.27 749.8,550.37 749.8,558.17" fill="#000"/>
<text x="791" y="552.18" text-anchor="end">LT BLU</text>
<text x="828.4" y="557.48">SLP</text>
<path d="M822.1 561.68 A4.58 4.58 0 0 0 822.1 570.28" fill="none" stroke="#30303a" stroke-width="1.2"/>
<text x="815.9" y="564.09" text-anchor="end">19</text>
<line x1="748.6" y1="565.98" x2="819.8" y2="565.98" stroke="#2dab24" stroke-width="1.7"/>
<polygon points="742.6,565.98 749.8,562.08 749.8,569.88" fill="#000"/>
<text x="791" y="563.89" text-anchor="end">GRN</text>
<text x="828.4" y="569.19">SLR+</text>
<path d="M822.1 573.39 A4.58 4.58 0 0 0 822.1 581.99" fill="none" stroke="#30303a" stroke-width="1.2"/>
<text x="815.9" y="575.8" text-anchor="end">20</text>
<path d="M822.1 585.1 A4.58 4.58 0 0 0 822.1 593.7" fill="none" stroke="#30303a" stroke-width="1.2"/>
<text x="815.9" y="587.51" text-anchor="end">21</text>
<line x1="748.6" y1="589.4" x2="819.8" y2="589.4" stroke="#2dab24" stroke-width="1.7"/>
<polygon points="742.6,589.4 749.8,585.5 749.8,593.3" fill="#000"/>
<text x="791" y="587.31" text-anchor="end">GRN</text>
<text x="738.2" y="591.81" text-anchor="end">HEADLIGHTS SYSTEM</text>
<text x="828.4" y="592.61">A</text>
<path d="M822.1 596.81 A4.58 4.58 0 0 0 822.1 605.41" fill="none" stroke="#30303a" stroke-width="1.2"/>
<text x="815.9" y="599.22" text-anchor="end">22</text>
<line x1="748.6" y1="601.11" x2="819.8" y2="601.11" stroke="#ff82a6" stroke-width="1.7"/>
<polygon points="742.6,601.11 749.8,597.21 749.8,605.01" fill="#000"/>
<text x="791" y="599.02" text-anchor="end">PNK</text>
<text x="738.2" y="603.91" text-anchor="end">POWER DISTRIBUTION SYSTEM</text>
<text x="828.4" y="604.32">ACCD</text>
<path d="M822.1 608.52 A4.58 4.58 0 0 0 822.1 617.12" fill="none" stroke="#30303a" stroke-width="1.2"/>
<text x="815.9" y="610.93" text-anchor="end">23</text>
<line x1="748.6" y1="612.82" x2="819.8" y2="612.82" stroke="#ff19ff" stroke-width="1.7"/>
<polygon points="742.6,612.82 749.8,608.92 749.8,616.72" fill="#000"/>
<text x="791" y="610.73" text-anchor="end">VIO</text>
<text x="738.2" y="615.81" text-anchor="end">EXTERIOR LIGHTS SYSTEM</text>
<text x="828.4" y="616.03">TAIL</text>
<path d="M822.1 620.23 A4.58 4.58 0 0 0 822.1 628.83" fill="none" stroke="#30303a" stroke-width="1.2"/>
<text x="815.9" y="622.64" text-anchor="end">24</text>
<line x1="748.6" y1="624.53" x2="819.8" y2="624.53" stroke="#1414ff" stroke-width="1.7"/>
<polygon points="742.6,624.53 749.8,620.63 749.8,628.43" fill="#000"/>
<text x="791" y="622.44" text-anchor="end">BLU</text>
<text x="828.4" y="627.74">DCTY</text>
<path d="M822.1 631.94 A4.58 4.58 0 0 0 822.1 640.54" fill="none" stroke="#30303a" stroke-width="1.2"/>
<text x="815.9" y="634.35" text-anchor="end">25</text>
<line x1="748.6" y1="636.24" x2="819.8" y2="636.24" stroke="#ff1a1a" stroke-width="1.7"/>
<polygon points="742.6,636.24 749.8,632.34 749.8,640.14" fill="#000"/>
<text x="791" y="634.15" text-anchor="end">RED</text>
<text x="828.4" y="640.35">SWIL</text>
<path d="M822.1 643.65 A4.58 4.58 0 0 0 822.1 652.25" fill="none" stroke="#30303a" stroke-width="1.2"/>
<text x="815.9" y="646.06" text-anchor="end">26</text>
<line x1="748.6" y1="647.95" x2="819.8" y2="647.95" stroke="#1414ff" stroke-width="1.7"/>
<polygon points="742.6,647.95 749.8,644.05 749.8,651.85" fill="#000"/>
<text x="791" y="645.86" text-anchor="end">BLU</text>
<text x="740.4" y="650.11" text-anchor="end">DOOR LOCKS SYSTEM</text>
<text x="828.4" y="651.16">BDSU</text>
<text x="808" y="656.91">E1</text>
<line x1="808" y1="657.8" x2="816" y2="657.8" stroke="#999" stroke-width="0.6"/>
<path d="M742.4 446.48 q-2 0 -2 2 L740.4 451.74 l-3 3 l3 3 L740.4 460.99 q0 2 2 2" fill="none" stroke="#30303a" stroke-width="0.9"/>
<text x="729.2" y="458.21" text-anchor="end">DOOR LOCKS SYSTEM</text>
<path d="M742.4 469.9 q-2 0 -2 2 L740.4 475.15 l-3 3 l3 3 L740.4 484.41 q0 2 2 2" fill="none" stroke="#30303a" stroke-width="0.9"/>
<text x="729.2" y="481.11" text-anchor="end">MIRRORS SYSTEM</text>
<path d="M742.4 505.03 q-2 0 -2 2 L740.4 522 l-3 3 l3 3 L740.4 542.96 q0 2 2 2" fill="none" stroke="#30303a" stroke-width="0.9"/>
<text x="731" y="528.11" text-anchor="end">DOOR LOCKS SYSTEM</text>
<path d="M742.4 551.87 q-2 0 -2 2 L740.4 557.12 l-3 3 l3 3 L740.4 566.38 q0 2 2 2" fill="none" stroke="#30303a" stroke-width="0.9"/>
<text x="731" y="562.91" text-anchor="end">SHIFT INTERLOCK SYSTEM</text>
<path d="M742.4 622.13 q-2 0 -2 2 L740.4 627.38 l-3 3 l3 3 L740.4 636.64 q0 2 2 2" fill="none" stroke="#30303a" stroke-width="0.9"/>
<text x="729.2" y="632.91" text-anchor="end">INTERIOR LIGHTS SYSTEM</text>
</svg>
<div id="ftr"></div>
</body></html>
